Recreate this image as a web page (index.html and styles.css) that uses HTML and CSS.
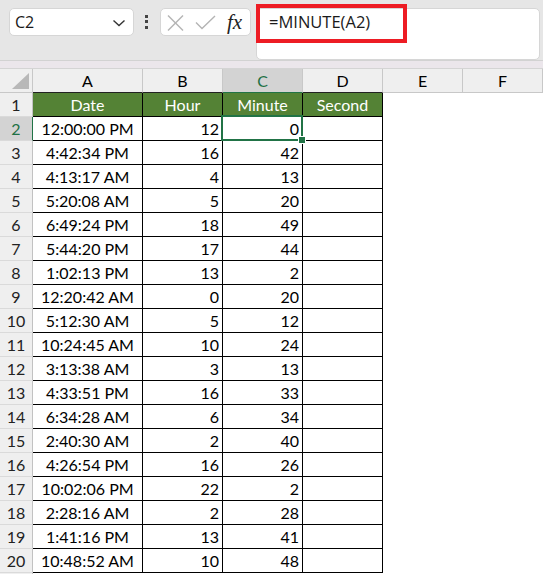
FILE: index.html
```html
<!DOCTYPE html>
<html>
<head>
<meta charset="utf-8">
<link rel="stylesheet" href="styles.css">
</head>
<body>
<div class="app">
  <div class="toolbar">
    <div class="namebox">
      <span class="nb-text">C2</span>
      <svg class="chev" width="14" height="8" viewBox="0 0 14 8"><polyline points="1.5,1.5 7,6.5 12.5,1.5" fill="none" stroke="#333" stroke-width="1.4"/></svg>
    </div>
    <div class="dots"><i></i><i></i><i></i></div>
    <div class="iconbox">
      <svg class="ic-x" width="17" height="16" viewBox="0 0 17 16"><line x1="1" y1="0.5" x2="16" y2="15.5" stroke="#b4b4b4" stroke-width="1.4"/><line x1="16" y1="0.5" x2="1" y2="15.5" stroke="#b4b4b4" stroke-width="1.4"/></svg>
      <svg class="ic-ok" width="21" height="15" viewBox="0 0 21 15"><polyline points="1,7.5 7,13.5 20,1" fill="none" stroke="#b4b4b4" stroke-width="1.4"/></svg>
      <span class="fx">fx</span>
    </div>
    <div class="formula"><span class="f-text">=MINUTE(A2)</span></div>
    <div class="redbox"></div>
  </div>
  <div class="strip"></div>
  <div class="sheet">
    <div class="ch corner"><svg width="17" height="16" viewBox="0 0 17 16"><polygon points="17,0 17,16 0,16" fill="#b8b8b8"/></svg></div>
    <div class="ch blk">A</div>
    <div class="ch blk">B</div>
    <div class="ch blk sel">C</div>
    <div class="ch blk">D</div>
    <div class="ch">E</div>
    <div class="ch">F</div>

    <div class="rh">1</div><div class="c hd">Date</div><div class="c hd">Hour</div><div class="c hd">Minute</div><div class="c hd">Second</div><div class="e"></div><div class="e"></div>
    <div class="rh rsel">2</div><div class="c ctr">12:00:00 PM</div><div class="c num">12</div><div class="c num active">0</div><div class="c"></div><div class="e"></div><div class="e"></div>
    <div class="rh">3</div><div class="c ctr">4:42:34 PM</div><div class="c num">16</div><div class="c num">42</div><div class="c"></div><div class="e"></div><div class="e"></div>
    <div class="rh">4</div><div class="c ctr">4:13:17 AM</div><div class="c num">4</div><div class="c num">13</div><div class="c"></div><div class="e"></div><div class="e"></div>
    <div class="rh">5</div><div class="c ctr">5:20:08 AM</div><div class="c num">5</div><div class="c num">20</div><div class="c"></div><div class="e"></div><div class="e"></div>
    <div class="rh">6</div><div class="c ctr">6:49:24 PM</div><div class="c num">18</div><div class="c num">49</div><div class="c"></div><div class="e"></div><div class="e"></div>
    <div class="rh">7</div><div class="c ctr">5:44:20 PM</div><div class="c num">17</div><div class="c num">44</div><div class="c"></div><div class="e"></div><div class="e"></div>
    <div class="rh">8</div><div class="c ctr">1:02:13 PM</div><div class="c num">13</div><div class="c num">2</div><div class="c"></div><div class="e"></div><div class="e"></div>
    <div class="rh">9</div><div class="c ctr">12:20:42 AM</div><div class="c num">0</div><div class="c num">20</div><div class="c"></div><div class="e"></div><div class="e"></div>
    <div class="rh">10</div><div class="c ctr">5:12:30 AM</div><div class="c num">5</div><div class="c num">12</div><div class="c"></div><div class="e"></div><div class="e"></div>
    <div class="rh">11</div><div class="c ctr">10:24:45 AM</div><div class="c num">10</div><div class="c num">24</div><div class="c"></div><div class="e"></div><div class="e"></div>
    <div class="rh">12</div><div class="c ctr">3:13:38 AM</div><div class="c num">3</div><div class="c num">13</div><div class="c"></div><div class="e"></div><div class="e"></div>
    <div class="rh">13</div><div class="c ctr">4:33:51 PM</div><div class="c num">16</div><div class="c num">33</div><div class="c"></div><div class="e"></div><div class="e"></div>
    <div class="rh">14</div><div class="c ctr">6:34:28 AM</div><div class="c num">6</div><div class="c num">34</div><div class="c"></div><div class="e"></div><div class="e"></div>
    <div class="rh">15</div><div class="c ctr">2:40:30 AM</div><div class="c num">2</div><div class="c num">40</div><div class="c"></div><div class="e"></div><div class="e"></div>
    <div class="rh">16</div><div class="c ctr">4:26:54 PM</div><div class="c num">16</div><div class="c num">26</div><div class="c"></div><div class="e"></div><div class="e"></div>
    <div class="rh">17</div><div class="c ctr">10:02:06 PM</div><div class="c num">22</div><div class="c num">2</div><div class="c"></div><div class="e"></div><div class="e"></div>
    <div class="rh">18</div><div class="c ctr">2:28:16 AM</div><div class="c num">2</div><div class="c num">28</div><div class="c"></div><div class="e"></div><div class="e"></div>
    <div class="rh">19</div><div class="c ctr">1:41:16 PM</div><div class="c num">13</div><div class="c num">41</div><div class="c"></div><div class="e"></div><div class="e"></div>
    <div class="rh">20</div><div class="c ctr">10:48:52 AM</div><div class="c num">10</div><div class="c num">48</div><div class="c"></div><div class="e"></div><div class="e"></div>
    <div class="rh"></div><div class="e"></div><div class="e"></div><div class="e"></div><div class="e"></div><div class="e"></div><div class="e"></div>
  </div>
</div>
</body>
</html>
```

FILE: styles.css
```css
html, body {
  margin: 0;
  padding: 0;
  background: #ffffff;
}
.app {
  width: 543px;
  height: 574px;
  overflow: hidden;
  position: relative;
}
.toolbar {
  position: relative;
  background: #e6e6e6;
  border-bottom: 1px solid #d2d2d2;
  display: flex;
  align-items: flex-start;
  padding: 8px 0 0 9px;
  box-sizing: content-box;
  height: 52px;
}
.namebox {
  width: 125px;
  height: 28px;
  box-sizing: border-box;
  background: #fff;
  border: 1px solid #d6d6d6;
  border-radius: 5px;
  display: flex;
  align-items: center;
  justify-content: space-between;
  padding: 0 7px 0 5px;
  font-family: "Open Sans", sans-serif;
  font-size: 16px;
  color: #1a1a1a;
}
.nb-text {
  line-height: 26px;
}
.chev {
  margin-top: 1px;
}
.dots {
  width: 4px;
  margin-left: 11px;
  margin-top: 7px;
  display: flex;
  flex-direction: column;
  gap: 2.4px;
}
.dots i {
  display: block;
  width: 3px;
  height: 3px;
  background: #444;
}
.iconbox {
  margin-left: 11px;
  width: 91px;
  height: 28px;
  box-sizing: border-box;
  background: #fff;
  border: 1px solid #d6d6d6;
  border-radius: 5px;
  display: flex;
  align-items: center;
  padding-left: 6px;
}
.ic-x {
  margin-top: 1px;
}
.ic-ok {
  margin-left: 11px;
  margin-top: 1px;
}
.fx {
  margin-left: 11px;
  font-family: "Liberation Serif", serif;
  font-style: italic;
  font-size: 21px;
  color: #222;
  line-height: 26px;
}
.formula {
  margin-left: 5px;
  width: 284px;
  height: 52px;
  box-sizing: border-box;
  background: #fff;
  border: 1px solid #d6d6d6;
  border-radius: 5px;
  padding-left: 12px;
  font-family: "Open Sans", sans-serif;
  font-size: 16.5px;
  color: #1a1a1a;
  line-height: 26px;
}
.redbox {
  position: absolute;
  left: 256px;
  top: 4px;
  width: 151px;
  height: 39px;
  box-sizing: border-box;
  border: 4.5px solid #ed1c24;
}
.strip {
  height: 7px;
  background: #ebe6eb;
}
.sheet {
  display: grid;
  grid-template-columns: 33px 110px 80px 80px 80px 80px 80px;
  grid-auto-rows: 24px;
  border-top: 1px solid #d4d4d4;
  font-family: "Lato", sans-serif;
  font-size: 16px;
  color: #000;
}
.sheet > div {
  box-sizing: border-box;
  line-height: 23px;
  white-space: nowrap;
  overflow: visible;
}
.ch {
  background: #efefef;
  border-right: 1px solid #c8c8c8;
  border-bottom: 1px solid #c8c8c8;
  text-align: center;
}
.ch.blk {
  border-bottom-color: #222;
}
.ch.sel {
  background: #d3d3d3;
  color: #1e7145;
  border-bottom: 1px solid #217346;
}
.corner {
  display: flex;
  align-items: flex-end;
  justify-content: flex-end;
  padding: 0 3px 3px 0;
}
.corner svg {
  display: block;
}
.rh {
  background: #efefef;
  border-right: 1px solid #c2c2c2;
  border-bottom: 1px solid #dadada;
  text-align: center;
  color: #222;
}
.rh.rsel {
  background: #d3d3d3;
  color: #1e7145;
  border-right: 1px solid #217346;
}
.c {
  border-right: 1px solid #000;
  border-bottom: 1px solid #000;
  padding: 0 3px;
  position: relative;
}
.e {
  background: #fff;
}
.hd {
  background: #548235;
  color: #fff;
  text-align: center;
}
.ctr {
  text-align: center;
}
.num {
  text-align: right;
}
.active::after {
  content: "";
  position: absolute;
  left: -2px;
  top: -2px;
  right: -1px;
  bottom: -1px;
  border: 2px solid #217346;
}
.active::before {
  content: "";
  position: absolute;
  right: -4px;
  bottom: -4px;
  width: 6px;
  height: 6px;
  background: #217346;
  border: 1px solid #fff;
  z-index: 2;
}
```
